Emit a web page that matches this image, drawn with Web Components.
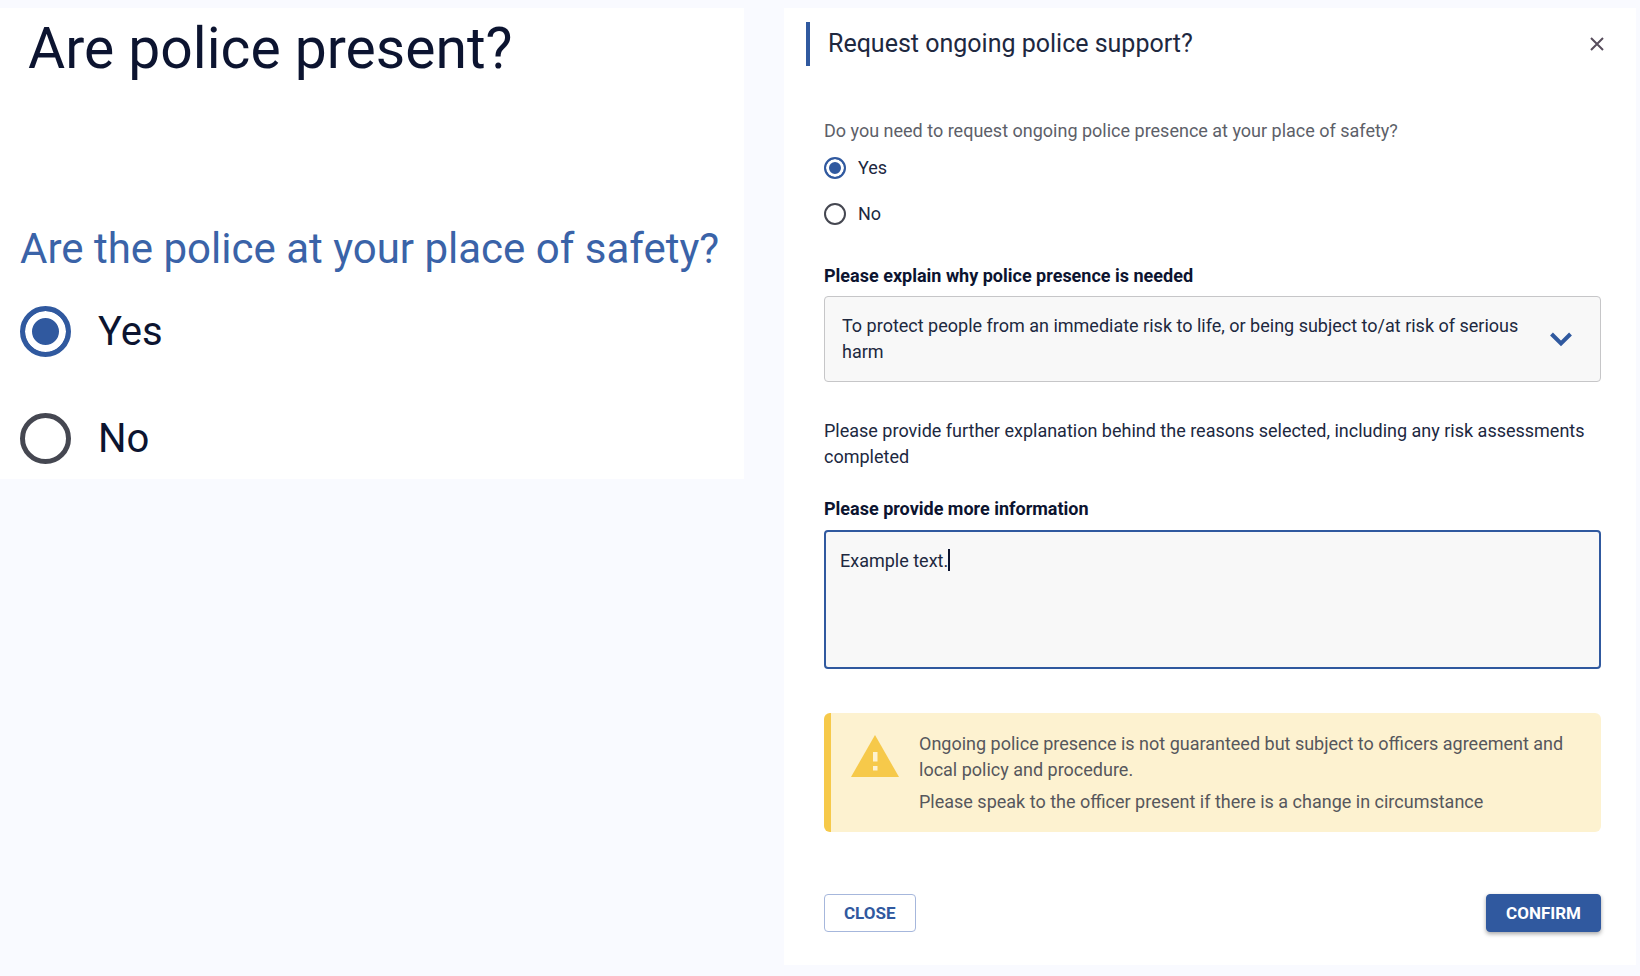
<!DOCTYPE html>
<html lang="en">
<head>
<meta charset="utf-8">
<meta name="viewport" content="width=device-width, initial-scale=1">
<title>Request ongoing police support</title>
<style>
  body {
    margin: 0;
    min-height: 100vh;
    background: #f9faff;
    font: 18px/26px Roboto, "Liberation Sans", sans-serif;
    color: #20283f;
    --blue: #30599f;
    --ink: #0c1430;
  }
</style>
</head>
<body>
<safety-page>
  <presence-card slot="summary" heading="Are police present?">
    <radio-group size="large" name="present" legend="Are the police at your place of safety?" options="Yes,No" value="Yes"></radio-group>
  </presence-card>
  <support-dialog slot="detail" heading="Request ongoing police support?">
    <radio-group name="ongoing" legend="Do you need to request ongoing police presence at your place of safety?" options="Yes,No" value="Yes"></radio-group>
    <select-field label="Please explain why police presence is needed" value="To protect people from an immediate risk to life, or being subject to/at risk of serious harm"></select-field>
    <help-text>Please provide further explanation behind the reasons selected, including any risk assessments completed</help-text>
    <note-field label="Please provide more information" value="Example text."></note-field>
    <warning-box>
      <span>Ongoing police presence is not guaranteed but subject to officers agreement and local policy and procedure.</span>
      <span>Please speak to the officer present if there is a change in circumstance</span>
    </warning-box>
    <action-button slot="actions">CLOSE</action-button>
    <action-button slot="actions" primary>CONFIRM</action-button>
  </support-dialog>
</safety-page>

<script>
class Base extends HTMLElement {
  render(html) {
    this.attachShadow({ mode: "open" }).innerHTML = "<style>*{box-sizing:border-box}</style>" + html;
  }
}

customElements.define("safety-page", class extends Base {
  connectedCallback() {
    this.render(`
      <style>
        :host { display: block; padding: 8px 4px 8px 0; }
        main { display: grid; grid-template-columns: 744fr 852fr; gap: 40px; align-items: start; }
        @media (max-width: 1000px) { main { grid-template-columns: 1fr; } }
      </style>
      <main><slot name="summary"></slot><slot name="detail"></slot></main>`);
  }
});

customElements.define("presence-card", class extends Base {
  connectedCallback() {
    this.render(`
      <style>
        :host { display: block; background: #fff; padding: 9px 20px 15px; }
        h1 { margin: 0 8px 144px; font-size: 57px; line-height: 64px; font-weight: 400; color: var(--ink); }
      </style>
      <h1>${this.getAttribute("heading")}</h1><slot></slot>`);
  }
});

customElements.define("support-dialog", class extends Base {
  connectedCallback() {
    this.render(`
      <style>
        :host { display: block; background: #fff; padding: 14px 22px 33px; }
        header { display: flex; align-items: center; justify-content: space-between; border-left: 4px solid var(--blue); padding-left: 18px; height: 44px; }
        h2 { margin: 0; font-size: 25px; line-height: 32px; font-weight: 400; }
        header button { border: 0; background: none; padding: 5px; display: flex; cursor: pointer; }
        .body { display: flex; flex-direction: column; padding: 52px 13px 0 18px; }
        footer { display: flex; justify-content: space-between; margin-top: 62px; }
      </style>
      <section aria-label="${this.getAttribute("heading")}">
        <header>
          <h2>${this.getAttribute("heading")}</h2>
          <button type="button" aria-label="Dismiss">
            <svg width="24" height="24" viewBox="0 0 24 24" fill="none" stroke="#574d5c" stroke-width="2"><path d="M6 6 18 18M18 6 6 18"/></svg>
          </button>
        </header>
        <div class="body">
          <slot></slot>
          <footer><slot name="actions"></slot></footer>
        </div>
      </section>`);
  }
});

customElements.define("radio-group", class extends Base {
  connectedCallback() {
    const name = this.getAttribute("name"), value = this.getAttribute("value");
    const rows = this.getAttribute("options").split(",").map(o => `
      <label><input type="radio" name="${name}" value="${o}" ${o === value ? "checked" : ""}><span>${o}</span></label>`).join("");
    this.render(`
      <style>
        :host { display: block; --dot: 22px; --ring: 2px; --gap: 3px; }
        fieldset { border: 0; margin: 0; padding: 0; min-width: 0; }
        legend { padding: 0; margin-bottom: 13px; color: #5d5f69; }
        .rows { display: flex; flex-direction: column; align-items: flex-start; gap: 24px; }
        label { display: flex; align-items: center; gap: 12px; line-height: 22px; cursor: pointer; }
        input { appearance: none; flex: none; margin: 0; width: var(--dot); height: var(--dot); border: var(--ring) solid #454751; border-radius: 50%; background: #fff; }
        input:checked { border-color: var(--blue); background: var(--blue); box-shadow: inset 0 0 0 var(--gap) #fff; }
        :host([size="large"]) { --dot: 51px; --ring: 5px; --gap: 7px; font-size: 42px; line-height: 48px; }
        :host([size="large"]) legend { color: #3a63a8; margin-bottom: 33px; }
        :host([size="large"]) .rows { gap: 56px; }
        :host([size="large"]) label { gap: 27px; line-height: 51px; color: var(--ink); font-size: 40px; }
      </style>
      <fieldset><legend>${this.getAttribute("legend")}</legend><div class="rows">${rows}</div></fieldset>`);
  }
});

customElements.define("select-field", class extends Base {
  connectedCallback() {
    this.render(`
      <style>
        :host { display: block; margin-top: 40px; }
        label { display: block; font-weight: 700; line-height: 22px; margin-bottom: 9px; color: var(--ink); }
        .box { display: grid; align-items: center; }
        select, svg { grid-area: 1 / 1; }
        select { appearance: none; width: 100%; height: auto; margin: 0; border: 1px solid #c6c6c8; border-radius: 4px; background: #f8f8f8; padding: 16px 70px 16px 17px; font: inherit; color: inherit; white-space: normal; }
        svg { justify-self: end; margin-right: 28px; pointer-events: none; }
      </style>
      <label for="s">${this.getAttribute("label")}</label>
      <div class="box">
        <select id="s"><option>${this.getAttribute("value")}</option></select>
        <svg width="24" height="24" viewBox="0 0 24 24" fill="none" stroke="#30599f" stroke-width="4"><path d="M2.5 7 12 16.500 21.500 7"/></svg>
      </div>`);
  }
});

customElements.define("help-text", class extends Base {
  connectedCallback() {
    this.render(`<style>:host { display: block; margin: 36px 0 28px; } p { margin: 0; }</style><p><slot></slot></p>`);
  }
});

customElements.define("note-field", class extends Base {
  connectedCallback() {
    this.render(`
      <style>
        :host { display: block; }
        label { display: block; font-weight: 700; line-height: 22px; margin-bottom: 10px; color: var(--ink); }
        .box { position: relative; display: flex; }
        textarea { width: 100%; height: 139px; margin: 0; border: 2px solid var(--blue); border-radius: 4px; background: #f8f8f8; padding: 16px 14px; font: inherit; color: inherit; resize: none; outline: 0; caret-color: transparent; }
        i { position: absolute; top: 19px; width: 2px; height: 22px; background: var(--ink); pointer-events: none; }
      </style>
      <label for="t">${this.getAttribute("label")}</label>
      <div class="box"><textarea id="t">${this.getAttribute("value")}</textarea><i></i></div>`);
    // Place the insertion bar after the last typed character.
    const area = this.shadowRoot.querySelector("textarea"), bar = this.shadowRoot.querySelector("i");
    const pen = document.createElement("canvas").getContext("2d");
    const place = () => {
      pen.font = getComputedStyle(area).font;
      bar.style.left = 16 + Math.round(pen.measureText(area.value).width) + "px";
    };
    place();
    area.addEventListener("input", place);
  }
});

customElements.define("warning-box", class extends Base {
  connectedCallback() {
    this.render(`
      <style>
        :host { display: flex; align-items: flex-start; gap: 19px; margin-top: 44px; padding: 18px 20px 17px 19px; border-left: 7px solid #f6c94a; border-radius: 6px; background: #fdf2d0; color: #56575c; }
        svg { flex: none; margin-top: 4px; }
        div { display: flex; flex-direction: column; gap: 6px; }
      </style>
      <svg width="50" height="42" viewBox="0 0 50 42" aria-hidden="true"><path fill="#f6c94a" d="M25 0 49 42H1z"/><path fill="#fdf2d0" d="M23 17h4.500v9.500H23zM23 31h4.500v4.500H23z"/></svg>
      <div role="note"><slot></slot></div>`);
  }
});

customElements.define("action-button", class extends Base {
  connectedCallback() {
    this.render(`
      <style>
        :host { display: block; }
        button { display: block; border: 1px solid #a6b7dc; border-radius: 4px; background: #fff; color: var(--blue); padding: 0 19px; font: inherit; font-size: 17px; line-height: 36px; font-weight: 700; cursor: pointer; }
        :host([primary]) button { border-color: var(--blue); background: var(--blue); color: #fff; box-shadow: 0 2px 4px rgba(0, 0, 0, .35); }
      </style>
      <button type="button"><slot></slot></button>`);
  }
});
</script>
</body>
</html>
